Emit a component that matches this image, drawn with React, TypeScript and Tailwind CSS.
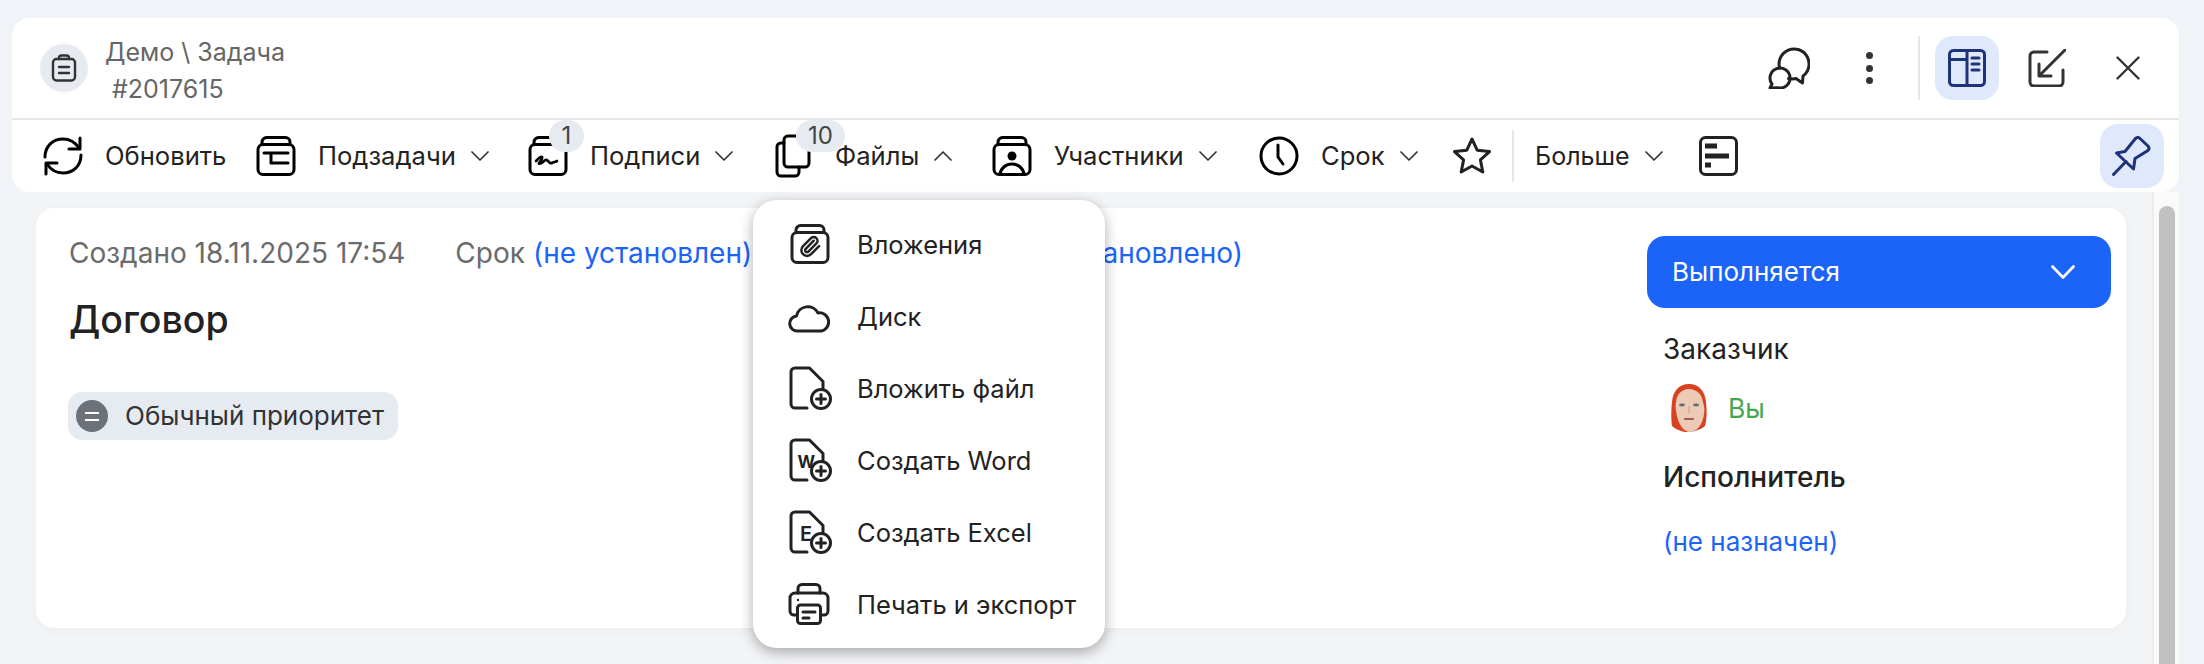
import React from 'react'

// Shared svg wrapper: coordinates are real pixels
function Ico({ w = 40, h = 40, sw = 3, className = '', children }: { w?: number; h?: number; sw?: number; className?: string; children: React.ReactNode }) {
  return (
    <svg width={w} height={h} viewBox={`0 0 ${w} ${h}`} fill="none" stroke="currentColor" strokeWidth={sw} strokeLinecap="round" strokeLinejoin="round" className={`shrink-0 ${className}`}>
      {children}
    </svg>
  )
}

function Chevron({ up = false }: { up?: boolean }) {
  return (
    <svg width="18" height="10" viewBox="0 0 18 10" fill="none" stroke="currentColor" strokeWidth="1.7" strokeLinecap="round" strokeLinejoin="round" className="shrink-0 text-[#333]">
      <path d={up ? 'M1 9 9 1l8 8' : 'M1 1l8 8 8-8'} />
    </svg>
  )
}

// Box with a tab on top, used by several toolbar and menu icons
function Jar({ children }: { children?: React.ReactNode }) {
  return (
    <Ico>
      <rect x="2" y="8.5" width="36" height="30" rx="5" />
      <path d="M6 8.5V6a4.5 4.5 0 0 1 4.5-4.5h19A4.5 4.5 0 0 1 34 6v2.5" />
      {children}
    </Ico>
  )
}

function FilePlus({ children }: { children?: React.ReactNode }) {
  return (
    <Ico w={44} h={44}>
      <path d="M19 42H7a4 4 0 0 1-4-4V6a4 4 0 0 1 4-4h14.5L35 15.5V22" />
      {children}
      <circle cx="33" cy="33" r="9.5" fill="#fff" />
      <path d="M33 28.5v9M28.5 33h9" />
    </Ico>
  )
}

function Badge({ n, w }: { n: string; w: string }) {
  return (
    <span className={`absolute left-[21px] top-[-16px] h-8 ${w} flex items-center justify-center rounded-2xl bg-[#e6ebf2] text-[24px] leading-none text-[#444]`}>
      {n}
    </span>
  )
}

function ToolItem({ icon, label, chevron, up, gap = 'ml-[22px]', className = '' }: { icon: React.ReactNode; label: string; chevron?: boolean; up?: boolean; gap?: string; className?: string }) {
  return (
    <div className={`flex items-center ${className}`}>
      <div className="relative h-10 w-10 shrink-0">{icon}</div>
      <span className={`${gap} text-[25.6px] leading-none text-[#222]`}>{label}</span>
      {chevron && <span className="ml-[15px] flex"><Chevron up={up} /></span>}
    </div>
  )
}

const MENU = [
  {
    label: 'Вложения',
    icon: (
      <div className="pl-0.5">
        <Jar>
          <g transform="translate(8.5 11) scale(0.95)" strokeWidth="2.6">
            <path d="m16 6-8.414 8.586a2 2 0 0 0 2.829 2.829l8.414-8.586a4 4 0 1 0-5.657-5.657l-8.379 8.551a6 6 0 1 0 8.485 8.485l8.379-8.551" />
          </g>
        </Jar>
      </div>
    ),
  },
  {
    label: 'Диск',
    icon: (
      <Ico w={42} h={42}>
        <path d="M10 36A7.5 7.5 0 0 1 8.5 21 11.5 11.5 0 0 1 30 18a9 9 0 0 1 3 18Z" />
      </Ico>
    ),
  },
  { label: 'Вложить файл', icon: <FilePlus /> },
  {
    label: 'Создать Word',
    icon: (
      <FilePlus>
        <text x="9.5" y="30" fontSize="17" fontWeight="700" fill="currentColor" stroke="none" fontFamily="Inter, sans-serif">W</text>
      </FilePlus>
    ),
  },
  {
    label: 'Создать Excel',
    icon: (
      <FilePlus>
        <text x="12" y="31" fontSize="20" fontWeight="600" fill="currentColor" stroke="none" fontFamily="Inter, sans-serif">E</text>
      </FilePlus>
    ),
  },
  {
    label: 'Печать и экспорт',
    icon: (
      <Ico w={42} h={42}>
        <path d="M10 10V5.5A4 4 0 0 1 14 1.5h14a4 4 0 0 1 4 4V10" />
        <path d="M9 32H6a4 4 0 0 1-4-4V15a5 5 0 0 1 5-5h28a5 5 0 0 1 5 5v13a4 4 0 0 1-4 4h-3" />
        <rect x="9.5" y="22" width="23" height="18.5" rx="3" />
        <path d="M15 29h12M15 35h6" />
        <circle cx="10" cy="17" r="1.2" fill="currentColor" stroke="none" />
      </Ico>
    ),
  },
]

export default function App() {
  return (
    <div className="relative h-[664px] w-[2204px] overflow-hidden bg-[#f0f4f8] pt-[18px] pl-3 font-['Inter',sans-serif]">
      {/* Header card */}
      <div className="relative z-10 w-[2167px] rounded-[18px] bg-white">
        <div className="flex h-[102px] items-center border-b-2 border-[#e7e7e7] pr-[39px] pl-7">
          <div className="flex h-12 w-12 items-center justify-center rounded-full bg-[#e6ebf2] text-[#333]">
            <Ico w={26} h={28} sw={2.4}>
              <rect x="2" y="5" width="22" height="21.5" rx="3.5" />
              <path d="M8 5V4a2.5 2.5 0 0 1 2.5-2.5h5A2.5 2.5 0 0 1 18 4v1M8 13h10M8 19h10" />
            </Ico>
          </div>
          <div className="ml-[17px] pt-[5px] text-[25px] leading-[37px] text-[#666]">
            <div>Демо \ Задача</div>
            <div className="pl-[7px]">#2017615</div>
          </div>
          <div className="ml-auto text-[#222]">
            <Ico w={42} h={42}>
              <path d="M11.6 21A15 15 0 1 1 35 29l-.5 7-6.5-4.5c-2 .5-5 .5-7.4.1" />
              <path d="M4 37A10 10 0 1 1 9.5 40.7L2 41Z" />
            </Ico>
          </div>
          <div className="ml-[55px] flex h-8 w-2 flex-col items-center justify-between">
            <span className="h-[7px] w-[7px] rounded-full bg-[#333]" />
            <span className="h-[7px] w-[7px] rounded-full bg-[#333]" />
            <span className="h-[7px] w-[7px] rounded-full bg-[#333]" />
          </div>
          <div className="ml-[45px] h-16 w-0.5 bg-[#e7e7e7]" />
          <div className="ml-[15px] flex h-16 w-16 items-center justify-center rounded-[18px] bg-[#dfe9fb] text-[#1f3378]">
            <Ico w={38} h={38}>
              <rect x="1.5" y="1.5" width="35" height="35" rx="4" />
              <path d="M19 1.5v35M1.5 10.5H19M24 9h7M24 15h7M24 21h7" />
            </Ico>
          </div>
          <div className="ml-[29px] text-[#333]">
            <Ico w={38} h={38}>
              <path d="M19 3H6a4 4 0 0 0-4 4v26a4 4 0 0 0 4 4h25a4 4 0 0 0 4-4V21" />
              <path d="M37 1 11 27M11 15v12h12" />
            </Ico>
          </div>
          <div className="ml-[50px] text-[#333]">
            <Ico w={24} h={24} sw={2.4}>
              <path d="M1.5 1.5l21 21M22.5 1.5l-21 21" />
            </Ico>
          </div>
        </div>

        {/* Toolbar */}
        <div className="flex h-[72px] items-center pr-[15px] pl-[31px]">
          <ToolItem
            label="Обновить"
            className="w-[213px]"
            icon={
              <Ico>
                <path d="M2 21C2 10 10 3 20 3c7 0 12 3 16 9" />
                <path d="M37 2v11H26" />
                <path d="M38 19c0 11-8 18-18 18-7 0-12-3-16-9" />
                <path d="M3 38V27h11" />
              </Ico>
            }
          />
          <ToolItem
            label="Подзадачи"
            chevron
            className="w-[272px]"
            icon={
              <Jar>
                <path d="M8 17h24M15 17v10M15 27h17" />
              </Jar>
            }
          />
          <ToolItem
            label="Подписи"
            chevron
            className="w-[247px]"
            icon={
              <>
                <Jar>
                  <path d="M8 25c2-2 5-5 6-4s-2 5-3 6 2 1 4-1 3-3 5-1 2 3 4 2 4-1 5-2" strokeWidth="2.6" />
                </Jar>
                <Badge n="1" w="w-[35px]" />
              </>
            }
          />
          <ToolItem
            label="Файлы"
            chevron
            up
            gap="ml-5"
            className="w-[217px]"
            icon={
              <>
                <Ico h={44} className="-mt-0.5">
                  <rect x="9" y="2" width="25" height="31" rx="4" />
                  <path d="M9 9H6a4 4 0 0 0-4 4v25a4 4 0 0 0 4 4h14a4 4 0 0 0 4-4v-5" />
                </Ico>
                <Badge n="10" w="w-[49px]" />
              </>
            }
          />
          <ToolItem
            label="Участники"
            chevron
            className="w-[267px]"
            icon={
              <Jar>
                <circle cx="20" cy="20" r="4.5" fill="currentColor" stroke="none" />
                <path d="M8 38c1-6 6-10 12-10s11 4 12 10" />
              </Jar>
            }
          />
          <ToolItem
            label="Срок"
            chevron
            className="w-[193px]"
            icon={
              <Ico>
                <circle cx="20" cy="20" r="18" />
                <path d="M19 9v12l5 7" />
              </Ico>
            }
          />
          <div className="w-10 text-[#222]">
            <Ico>
              <path d="m20 3 5.2 11.2 12.3 1.4-9.1 8.3 2.4 12.1L20 30l-10.8 6 2.4-12.1-9.1-8.3 12.3-1.4Z" />
            </Ico>
          </div>
          <div className="ml-5 h-[52px] w-0.5 bg-[#e7e7e7]" />
          <span className="ml-[21px] text-[25px] leading-none text-[#222]">Больше</span>
          <span className="ml-[15px] flex"><Chevron /></span>
          <div className="ml-9 text-[#222]">
            <Ico>
              <rect x="1.5" y="1.5" width="36" height="37" rx="5" />
              <path d="M6 10h12M6 20h24M6 29h6" strokeWidth="5" strokeLinecap="butt" />
            </Ico>
          </div>
          <div className="ml-auto flex h-16 w-16 items-center justify-center rounded-[18px] bg-[#dfe9fb] text-[#1f3378]">
            <Ico>
              <path d="M1.5 38.5 14 25.5" />
              <path d="M4.5 17 13 15.5 23.5 2.5q2.5-2 4.5 0l8 7.5q2 2.5 0 4.5l-13 8L21.5 33Z" />
            </Ico>
          </div>
        </div>
      </div>

      {/* Body */}
      <div className="flex h-[472px] w-[2167px] bg-[#f3f4f6]">
        <div className="mt-4 ml-6 flex h-[420px] w-[2090px] rounded-[18px] bg-white shadow-[0_2px_12px_rgba(0,0,0,0.03)]">
          <div className="flex-1 pt-7 pl-8">
            <div className="ml-px flex text-[28px] leading-[34px] whitespace-nowrap">
              <span className="text-[#6b6b6b]">Создано 18.11.2025 17:54</span>
              <span className="ml-[50px] text-[#6b6b6b]">Срок</span>
              <span className="ml-2 text-[#1c64f8]">(не установлен)</span>
              <span className="ml-[255px] text-[#1c64f8]">(не установлено)</span>
            </div>
            <h1 className="mt-7 ml-px text-[37.5px] leading-[44px] font-medium text-[#222]">Договор</h1>
            <div className="mt-[50px] flex h-12 w-[330px] items-center rounded-[14px] bg-[#e6ebf2] pl-2">
              <span className="flex h-8 w-8 flex-col items-center justify-center gap-[5px] rounded-full bg-[#6c717a]">
                <span className="h-0.5 w-3.5 bg-white" />
                <span className="h-0.5 w-3.5 bg-white" />
              </span>
              <span className="ml-[17px] text-[26px] leading-none text-[#333]">Обычный приоритет</span>
            </div>
          </div>

          <div className="mr-[15px] w-[464px] pt-7">
            <div className="flex h-[72px] items-center justify-between rounded-[18px] bg-[#1c64f8] pr-9 pl-[25px] text-white">
              <span className="text-[26px] leading-none">Выполняется</span>
              <svg width="24" height="14" viewBox="0 0 24 14" fill="none" stroke="currentColor" strokeWidth="2.6" strokeLinecap="round" strokeLinejoin="round">
                <path d="M1.5 1.5 12 12.5 22.5 1.5" />
              </svg>
            </div>
            <div className="mt-6 pl-4 text-[28px] leading-[34px] text-[#222]">Заказчик</div>
            <div className="mt-[18px] flex h-12 items-center pl-[23px]">
              <svg width="38" height="48" viewBox="0 0 38 48" className="shrink-0">
                <path d="M19 0C9 0 3 7 2 18c-1 9-1 18 0 24 5 4 11 6 15 6 6 0 13-2 18-6 2-7 2-16 1-24C35 7 29 0 19 0Z" fill="#d9421f" />
                <path d="M19 5C12 5 7 10 6 18c-1 5 0 9 1 14 2 9 7 16 13 16 7 0 13-8 14-18 1-4 0-8-1-12C32 10 26 5 19 5Z" fill="#eccbb6" />
                <ellipse cx="12" cy="21" rx="3" ry="1.4" fill="#5f6f70" />
                <ellipse cx="26" cy="21" rx="3" ry="1.4" fill="#5f6f70" />
                <path d="M19 22v7" stroke="#d8ac96" strokeWidth="1.5" />
                <path d="M15 35h8" stroke="#a8565a" strokeWidth="2.2" strokeLinecap="round" />
              </svg>
              <span className="ml-5 text-[26.5px] leading-none text-[#46a64f]">Вы</span>
            </div>
            <div className="mt-7 pl-4 text-[28px] leading-[34px] font-medium text-[#222]">Исполнитель</div>
            <div className="mt-[31px] pl-4 text-[26px] leading-[34px] text-[#1c64f8]">(не назначен)</div>
          </div>
        </div>

        <div className="mt-0 ml-auto w-[27px] border-l-2 border-[#ececec] bg-[#fafafa] pt-[14px] pl-[5px]">
          <div className="h-[500px] w-4 rounded-lg bg-[#c1c1c1]" />
        </div>
      </div>

      {/* Open "Файлы" dropdown */}
      <div className="absolute top-[200px] left-[753px] z-20 w-[352px] rounded-[24px] bg-white pt-[9px] pb-[7px] pl-[35px] shadow-[0_4px_14px_rgba(0,0,0,0.32)]">
        {MENU.map((item) => (
          <div key={item.label} className="flex h-[72px] items-center text-[#222]">
            <div className="-mt-0.5 flex w-[42px] shrink-0 justify-start">{item.icon}</div>
            <span className="ml-[27px] text-[25.5px] leading-none whitespace-nowrap">{item.label}</span>
          </div>
        ))}
      </div>
    </div>
  )
}
